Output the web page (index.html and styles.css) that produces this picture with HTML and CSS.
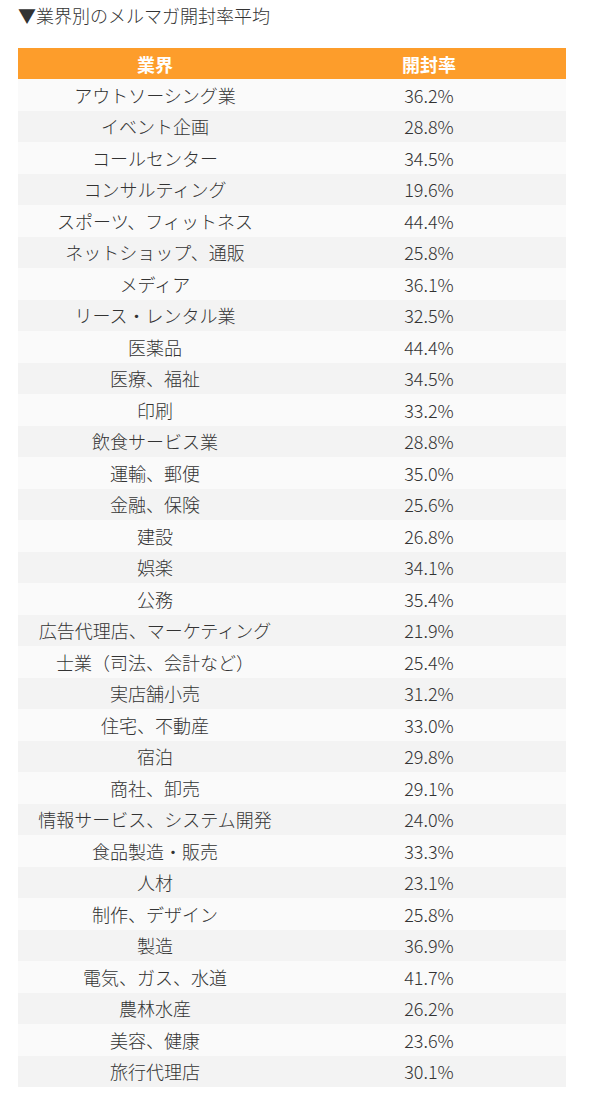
FILE: index.html
```html
<!DOCTYPE html>
<html lang="ja">
<head>
    <meta charset="UTF-8">
    <meta name="viewport" content="width=device-width, initial-scale=1.0">
    <title>業界別のメルマガ開封率平均</title>
    <link rel="stylesheet" href="styles.css">
</head>
<body>
    <div class="container">
        <p class="caption">▼業界別のメルマガ開封率平均</p>
        <table class="rate-table">
            <thead>
                <tr><th>業界</th><th>開封率</th></tr>
            </thead>
            <tbody>
                <tr><td>アウトソーシング業</td><td>36.2%</td></tr>
                <tr><td>イベント企画</td><td>28.8%</td></tr>
                <tr><td>コールセンター</td><td>34.5%</td></tr>
                <tr><td>コンサルティング</td><td>19.6%</td></tr>
                <tr><td>スポーツ、フィットネス</td><td>44.4%</td></tr>
                <tr><td>ネットショップ、通販</td><td>25.8%</td></tr>
                <tr><td>メディア</td><td>36.1%</td></tr>
                <tr><td>リース・レンタル業</td><td>32.5%</td></tr>
                <tr><td>医薬品</td><td>44.4%</td></tr>
                <tr><td>医療、福祉</td><td>34.5%</td></tr>
                <tr><td>印刷</td><td>33.2%</td></tr>
                <tr><td>飲食サービス業</td><td>28.8%</td></tr>
                <tr><td>運輸、郵便</td><td>35.0%</td></tr>
                <tr><td>金融、保険</td><td>25.6%</td></tr>
                <tr><td>建設</td><td>26.8%</td></tr>
                <tr><td>娯楽</td><td>34.1%</td></tr>
                <tr><td>公務</td><td>35.4%</td></tr>
                <tr><td>広告代理店、マーケティング</td><td>21.9%</td></tr>
                <tr><td>士業（司法、会計など）</td><td>25.4%</td></tr>
                <tr><td>実店舗小売</td><td>31.2%</td></tr>
                <tr><td>住宅、不動産</td><td>33.0%</td></tr>
                <tr><td>宿泊</td><td>29.8%</td></tr>
                <tr><td>商社、卸売</td><td>29.1%</td></tr>
                <tr><td>情報サービス、システム開発</td><td>24.0%</td></tr>
                <tr><td>食品製造・販売</td><td>33.3%</td></tr>
                <tr><td>人材</td><td>23.1%</td></tr>
                <tr><td>制作、デザイン</td><td>25.8%</td></tr>
                <tr><td>製造</td><td>36.9%</td></tr>
                <tr><td>電気、ガス、水道</td><td>41.7%</td></tr>
                <tr><td>農林水産</td><td>26.2%</td></tr>
                <tr><td>美容、健康</td><td>23.6%</td></tr>
                <tr><td>旅行代理店</td><td>30.1%</td></tr>
            </tbody>
        </table>
    </div>
</body>
</html>
```

FILE: styles.css
```css
body {
    font-family: "Noto Sans CJK JP", "Noto Sans", sans-serif;
    margin: 0;
    padding: 0;
    background: #fff;
    color: #333;
}
.container {
    padding: 0 23px 0 18px;
}
.caption {
    margin: 0;
    padding-top: 3px;
    font-size: 18px;
    font-weight: 300;
    line-height: 24px;
    color: #333;
}
.rate-table {
    width: 100%;
    margin-top: 21px;
    border-collapse: collapse;
    font-size: 18px;
}
.rate-table th,
.rate-table td {
    width: 50%;
    text-align: center;
    padding: 0;
}
.rate-table th {
    background: #fd9d2b;
    color: #fff;
    font-weight: bold;
    height: 31px;
}
.rate-table td {
    height: 31.5px;
    font-weight: 300;
    color: #333;
}
.rate-table tbody tr:nth-child(odd) {
    background: #fafafa;
}
.rate-table tbody tr:nth-child(even) {
    background: #f3f3f3;
}
```
